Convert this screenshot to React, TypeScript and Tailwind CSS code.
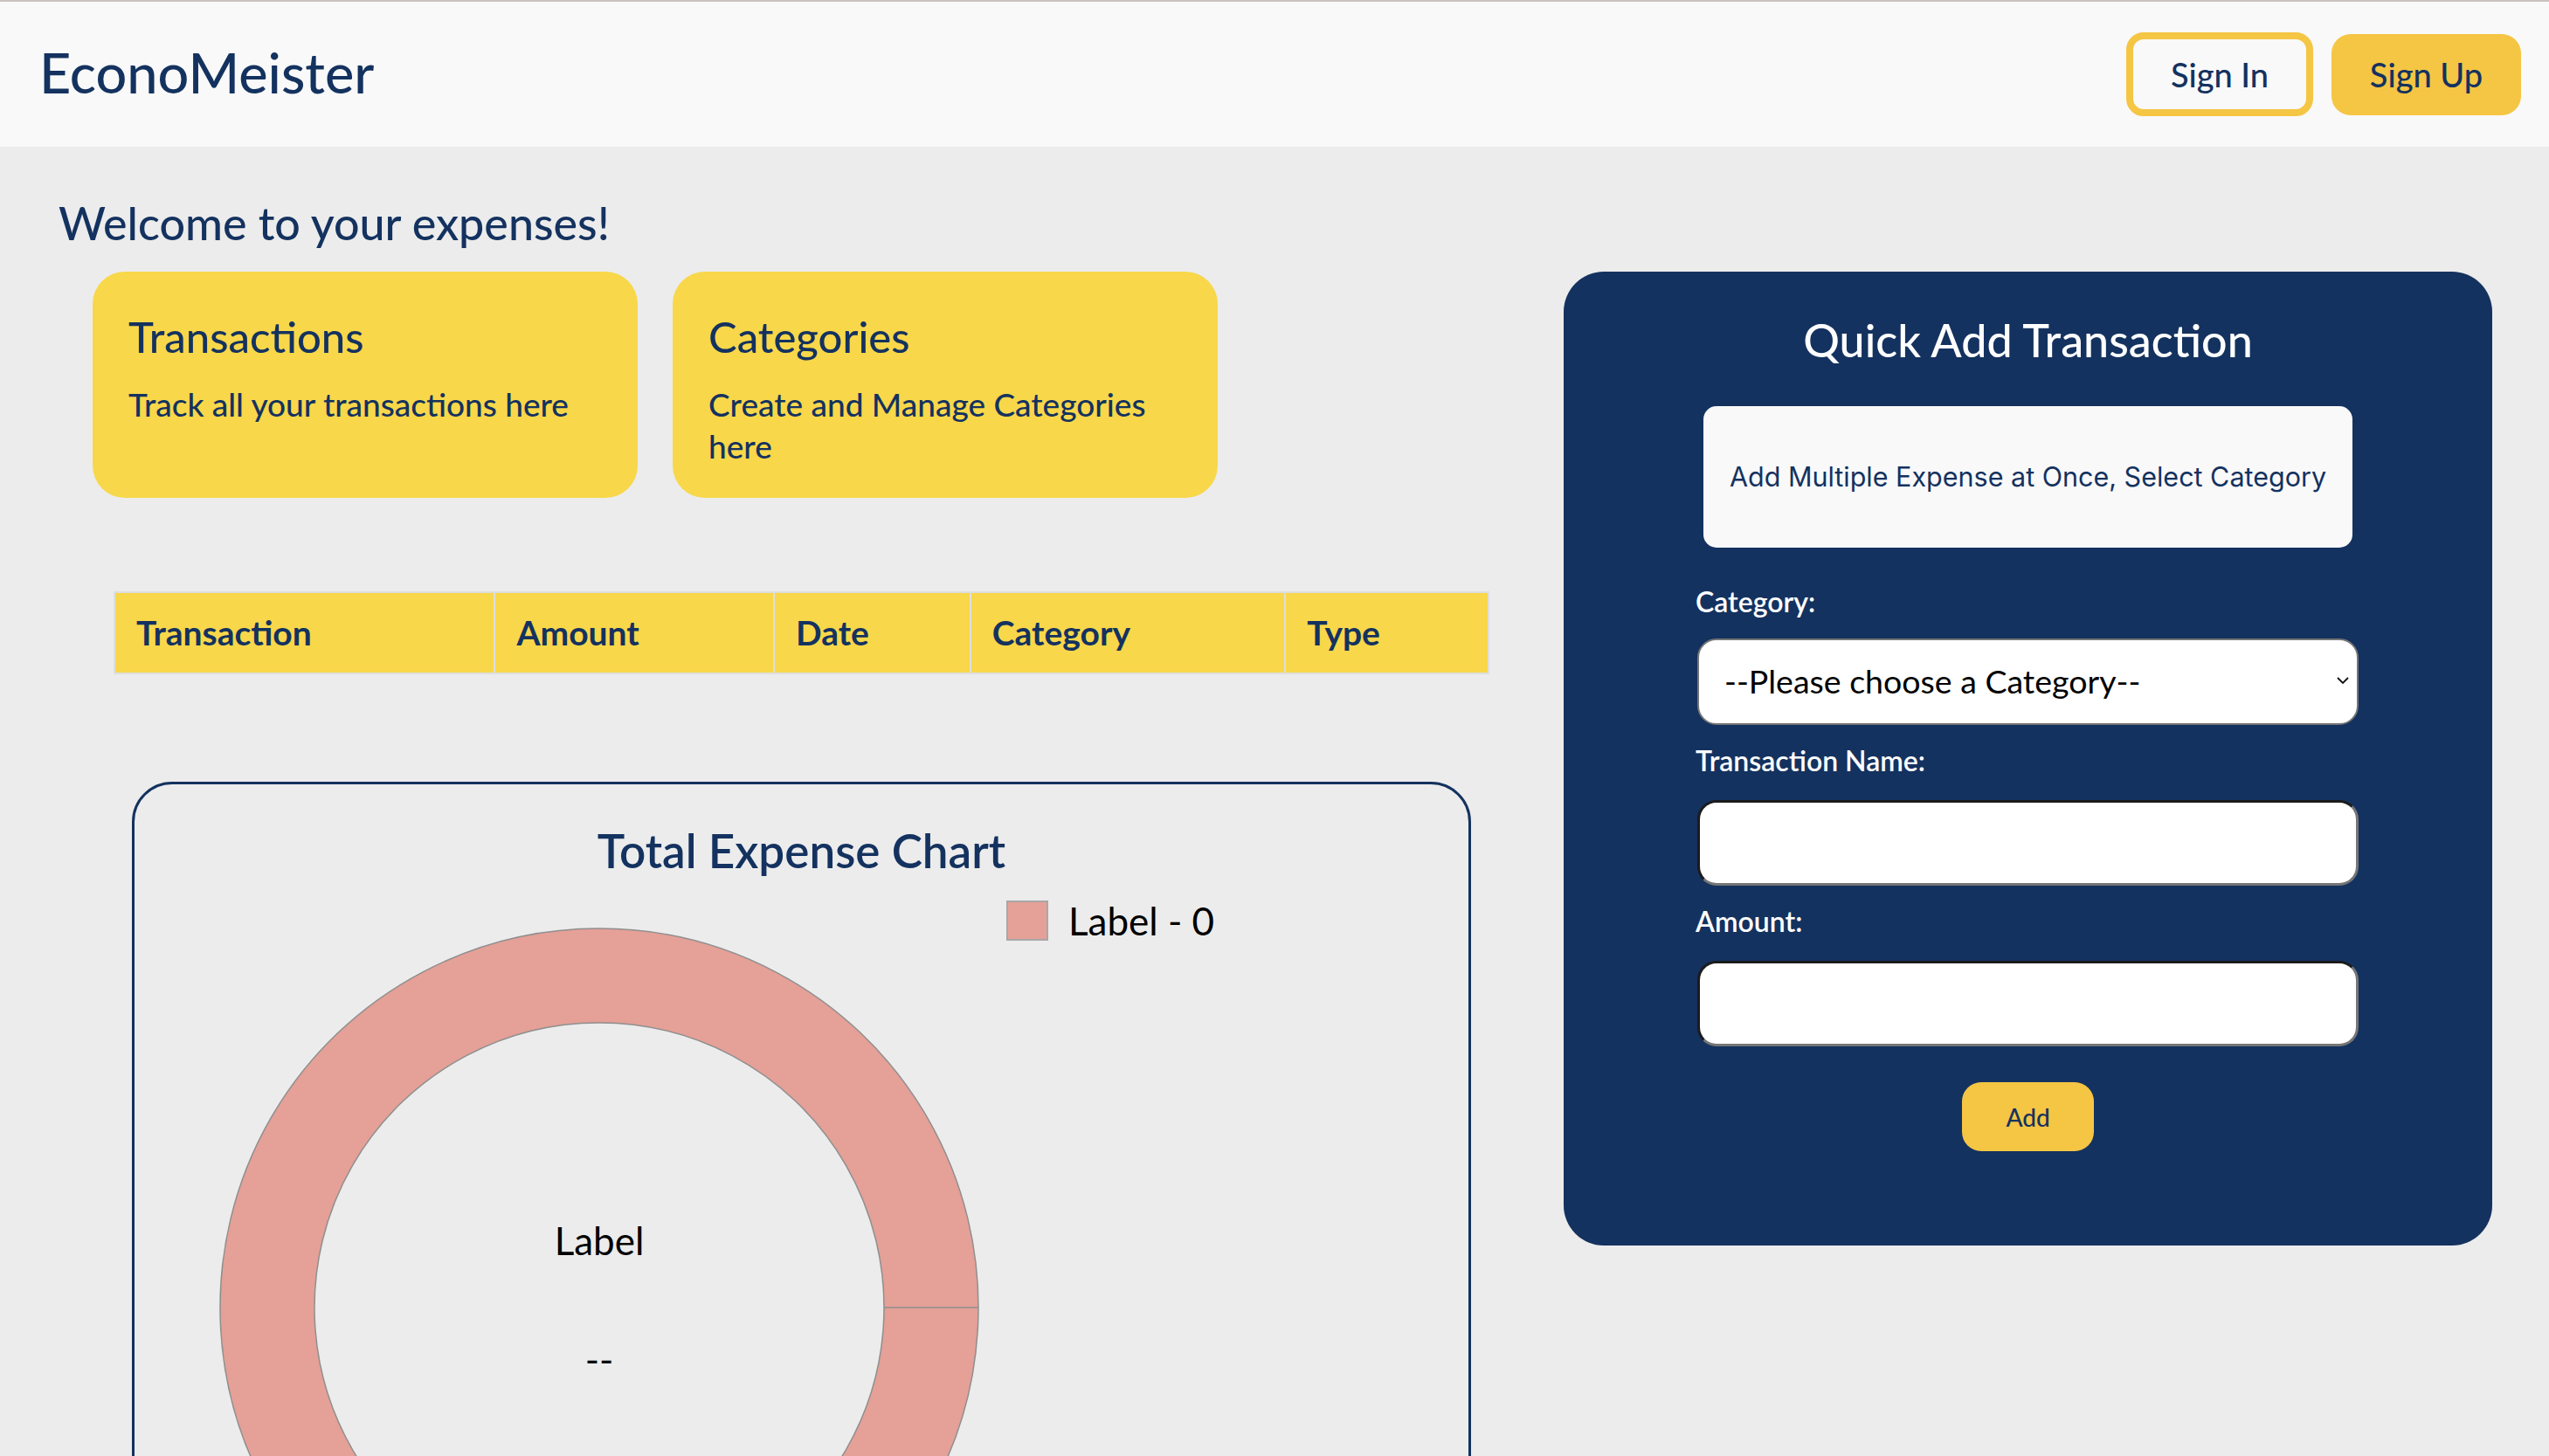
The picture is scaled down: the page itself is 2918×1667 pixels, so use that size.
import React from "react";

const font = { fontFamily: "Lato, 'Open Sans', sans-serif" };

const Header: React.FC = () => {
  return (
    <header className="h-[168px] flex items-center justify-between pl-[45px] pr-[32px] bg-[#f9f9f9] border-t-2 border-[#cbc3c0]">
      <h1 className="text-[63px] leading-none font-medium text-[#14325f] -mt-[5px]">EconoMeister</h1>
      <div className="flex items-center gap-[21px]">
        <button className="w-[214px] h-[96px] border-[8px] border-[#f5c544] rounded-[20px] text-[38px] font-medium text-[#14325f]">
          Sign In
        </button>
        <button className="w-[217px] h-[93px] bg-[#f5c544] rounded-[22px] text-[38px] font-medium text-[#14325f]">
          Sign Up
        </button>
      </div>
    </header>
  );
};

const Card = ({ title, text }: { title: string; text: string }) => (
  <div className="w-[624px] h-[259px] bg-[#f8d74a] rounded-[37px] px-[41px] pt-[45px] text-[#14325f]">
    <h2 className="text-[49px] leading-[58px] font-medium">{title}</h2>
    <p className="mt-[25px] text-[37px] leading-[48px] font-medium">{text}</p>
  </div>
);

const columns = [
  { name: "Transaction", w: "w-[436px]" },
  { name: "Amount", w: "w-[320px]" },
  { name: "Date", w: "w-[225px]" },
  { name: "Category", w: "w-[361px]" },
  { name: "Type", w: "w-[233px]" },
];

const Donut = () => (
  <div className="relative w-[870px] h-[870px]">
    <svg width="870" height="870" viewBox="0 0 870 870">
      <path
        d="M435 1 A434 434 0 1 1 434.99 1 Z M435 109 A326 326 0 1 0 435.01 109 Z"
        fill="#e5a097"
        fillRule="evenodd"
        stroke="#8f8f8f"
        strokeWidth="1.5"
      />
      <line x1="761" y1="435" x2="869" y2="435" stroke="#8f8f8f" strokeWidth="1.5" />
    </svg>
    <span className="absolute left-0 right-0 top-[333px] text-center text-[44px] leading-[50px] text-black">
      Label
    </span>
    <span className="absolute left-0 right-0 top-[469px] text-center text-[44px] leading-[50px] text-black">
      --
    </span>
  </div>
);

const QuickAdd = () => (
  <section className="w-[1063px] h-[1115px] mt-[143px] bg-[#14325f] rounded-[46px] pt-[47px] flex flex-col items-center">
    <h2 className="text-[52px] leading-[62px] font-medium text-white">Quick Add Transaction</h2>
    <button
      className="mt-[45px] w-[743px] h-[162px] bg-[#f9f9f9] rounded-[15px] text-[30.5px] text-[#14325f]"
      style={{ fontFamily: "Inter, 'Liberation Sans', sans-serif" }}
    >
      Add Multiple Expense at Once, Select Category
    </button>
    <form className="w-[757px] flex flex-col">
      <label className="mt-[43px] -ml-[2px] text-[32px] leading-[38px] text-white font-semibold">Category:</label>
      <div className="relative mt-[23px]">
        <select className="w-full h-[99px] appearance-none bg-white border-2 border-[#767676] rounded-[22px] pl-[29px] text-[37.5px] text-black">
          <option>--Please choose a Category--</option>
        </select>
        <svg className="absolute right-[10px] top-[42px]" width="16" height="12" viewBox="0 0 16 12">
          <path d="M2 3 L8 9 L14 3" fill="none" stroke="#111" strokeWidth="1.8" />
        </svg>
      </div>
      <label className="mt-[22px] -ml-[2px] text-[32px] leading-[38px] text-white font-semibold">
        Transaction Name:
      </label>
      <input className="mt-[26px] h-[98px] bg-white rounded-[22px] border-[3px] border-t-[#1b1b1b] border-l-[#1b1b1b] border-b-[#767676] border-r-[#767676]" />
      <label className="mt-[22px] -ml-[2px] text-[32px] leading-[38px] text-white font-semibold">Amount:</label>
      <input className="mt-[26px] h-[98px] bg-white rounded-[22px] border-[3px] border-t-[#1b1b1b] border-l-[#1b1b1b] border-b-[#767676] border-r-[#767676]" />
      <button type="button" className="self-center mt-[41px] w-[151px] h-[79px] bg-[#f5c544] rounded-[22px] text-[28px] font-medium text-[#14325f]">
        Add
      </button>
    </form>
  </section>
);

export default function App() {
  return (
    <div className="min-h-screen bg-[#ececec] overflow-hidden" style={font}>
      <Header />
      <main className="flex">
        <div className="w-[1790px] shrink-0">
          <h1 className="ml-[67px] mt-[57px] text-[52px] leading-[60px] font-medium text-[#14325f]">
            Welcome to your expenses!
          </h1>
          <div className="ml-[106px] mt-[26px] flex gap-[40px]">
            <Card title="Transactions" text="Track all your transactions here" />
            <Card title="Categories" text="Create and Manage Categories here" />
          </div>
          <table className="ml-[130px] mt-[107px] w-[1575px] border-collapse border-2 border-[#dedede]">
            <thead>
              <tr className="h-[93px] bg-[#f8d74a]">
                {columns.map((c) => (
                  <th
                    key={c.name}
                    className={`${c.w} border-2 border-[#dedede] pl-[24px] text-left text-[39px] font-bold text-[#14325f]`}
                  >
                    {c.name}
                  </th>
                ))}
              </tr>
            </thead>
          </table>
          <div className="ml-[151px] mt-[123px] w-[1533px] h-[1000px] border-[3px] border-[#14325f] rounded-[46px] pt-[46px]">
            <h2 className="text-center text-[53px] leading-[60px] text-[#14325f] font-semibold">
              Total Expense Chart
            </h2>
            <div className="flex items-start mt-[27px]">
              <div className="ml-[97px] mt-[31px]">
                <Donut />
              </div>
              <div className="ml-[31px] flex items-center gap-[23px]">
                <span className="w-[48px] h-[46px] bg-[#e5a097] border-2 border-[#a8a8a8]" />
                <span className="text-[44px] leading-[46px] text-black">Label - 0</span>
              </div>
            </div>
          </div>
        </div>
        <QuickAdd />
      </main>
    </div>
  );
}
